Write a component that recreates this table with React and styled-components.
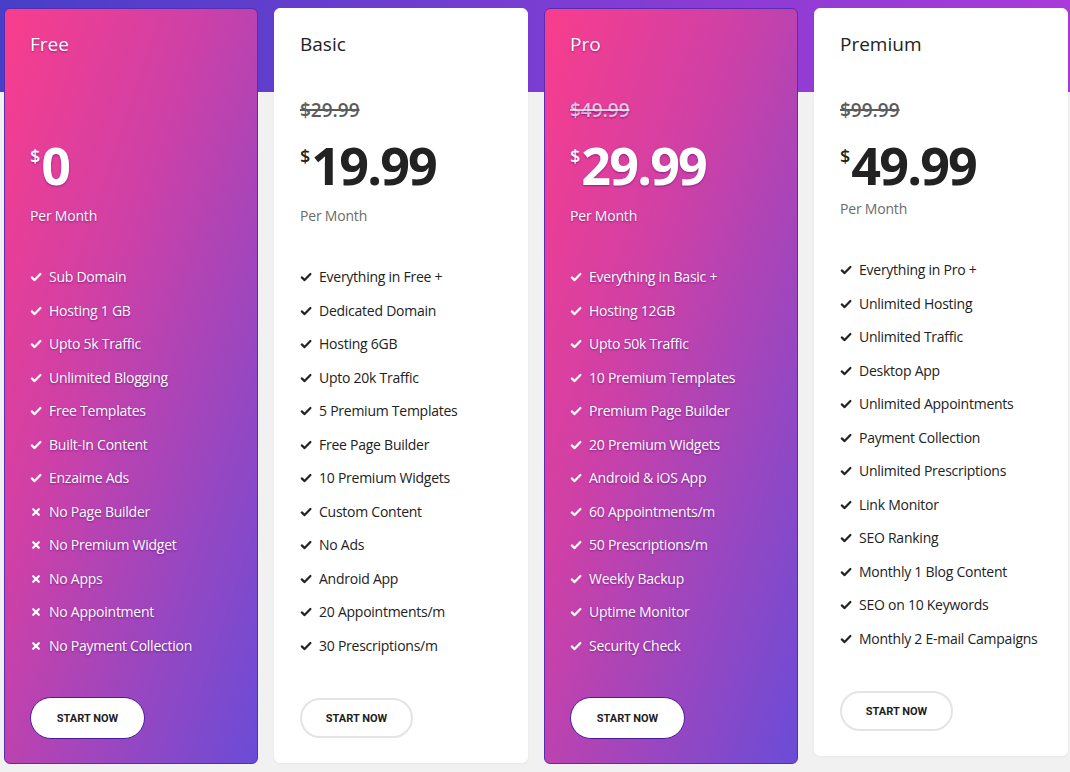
import React from "react";
import styled, { createGlobalStyle } from "styled-components";

const plans = [
  {
    name: "Free",
    price: "0",
    featured: true,
    features: [
      ["Sub Domain", true],
      ["Hosting 1 GB", true],
      ["Upto 5k Traffic", true],
      ["Unlimited Blogging", true],
      ["Free Templates", true],
      ["Built-In Content", true],
      ["Enzaime Ads", true],
      ["No Page Builder", false],
      ["No Premium Widget", false],
      ["No Apps", false],
      ["No Appointment", false],
      ["No Payment Collection", false],
    ],
  },
  {
    name: "Basic",
    oldPrice: "$29.99",
    price: "19.99",
    features: [
      "Everything in Free +",
      "Dedicated Domain",
      "Hosting 6GB",
      "Upto 20k Traffic",
      "5 Premium Templates",
      "Free Page Builder",
      "10 Premium Widgets",
      "Custom Content",
      "No Ads",
      "Android App",
      "20 Appointments/m",
      "30 Prescriptions/m",
    ],
  },
  {
    name: "Pro",
    oldPrice: "$49.99",
    price: "29.99",
    featured: true,
    features: [
      "Everything in Basic +",
      "Hosting 12GB",
      "Upto 50k Traffic",
      "10 Premium Templates",
      "Premium Page Builder",
      "20 Premium Widgets",
      "Android & iOS App",
      "60 Appointments/m",
      "50 Prescriptions/m",
      "Weekly Backup",
      "Uptime Monitor",
      "Security Check",
    ],
  },
  {
    name: "Premium",
    oldPrice: "$99.99",
    price: "49.99",
    tight: true,
    features: [
      "Everything in Pro +",
      "Unlimited Hosting",
      "Unlimited Traffic",
      "Desktop App",
      "Unlimited Appointments",
      "Payment Collection",
      "Unlimited Prescriptions",
      "Link Monitor",
      "SEO Ranking",
      "Monthly 1 Blog Content",
      "SEO on 10 Keywords",
      "Monthly 2 E-mail Campaigns",
    ],
  },
];

function CheckIcon() {
  return (
    <svg width="12" height="12" viewBox="0 0 12 12">
      <path
        d="M1.8 6.4 L4.6 9.1 L10.4 3"
        fill="none"
        stroke="currentColor"
        strokeWidth="2.2"
        strokeLinecap="round"
        strokeLinejoin="round"
      />
    </svg>
  );
}

function CrossIcon() {
  return (
    <svg width="12" height="12" viewBox="0 0 12 12">
      <path
        d="M3.2 3.2 L8.8 8.8 M8.8 3.2 L3.2 8.8"
        fill="none"
        stroke="currentColor"
        strokeWidth="2.2"
        strokeLinecap="round"
      />
    </svg>
  );
}

function App() {
  return (
    <Page>
      <GlobalStyle />
      <Grid>
        {plans.map((plan) => (
          <Card key={plan.name} $featured={plan.featured}>
            <Title>{plan.name}</Title>
            <OldPrice $featured={plan.featured}>{plan.oldPrice}</OldPrice>
            <PriceRow>
              <Currency>$</Currency>
              <Amount>{plan.price}</Amount>
            </PriceRow>
            <Period $tight={plan.tight} $featured={plan.featured}>
              Per Month
            </Period>
            <FeatureList>
              {plan.features.map((f) => {
                const label = Array.isArray(f) ? f[0] : f;
                const ok = Array.isArray(f) ? f[1] : true;
                return (
                  <Feature key={label}>
                    <IconBox>{ok ? <CheckIcon /> : <CrossIcon />}</IconBox>
                    {label}
                  </Feature>
                );
              })}
            </FeatureList>
            <StartButton $featured={plan.featured}>START NOW</StartButton>
          </Card>
        ))}
      </Grid>
    </Page>
  );
}

const GlobalStyle = createGlobalStyle`
  body {
    margin: 0;
    background: #f1f1f1;
    font-family: "Open Sans", "Noto Sans", sans-serif;
  }
`;

const Page = styled.div`
  min-height: 772px;
  background:
    linear-gradient(to right, #473fc8 0%, #7a3dd2 50%, #aa3ad9 100%) 0 0 / 100% 92px no-repeat,
    #f1f1f1;
`;

const Grid = styled.div`
  display: grid;
  grid-template-columns: repeat(4, 254px);
  gap: 16px;
  align-items: start;
  padding: 8px 0 0 4px;
`;

const Card = styled.div`
  display: flex;
  flex-direction: column;
  align-items: flex-start;
  box-sizing: border-box;
  padding: 21px 25px 24px;
  border-radius: 6px;
  border: 1px solid ${(p) => (p.$featured ? "#5a2cb4" : "#ffffff")};
  background: ${(p) =>
    p.$featured
      ? "linear-gradient(to bottom right, #f93d8c 0%, #cf40a6 38%, #6a4cd7 100%)"
      : "#ffffff"};
  color: ${(p) => (p.$featured ? "#ffffff" : "#222222")};
  box-shadow: ${(p) => (p.$featured ? "none" : "0 1px 3px rgba(0,0,0,0.04)")};
  text-shadow: ${(p) => (p.$featured ? "0 1px 2px rgba(90, 10, 110, 0.6)" : "none")};
`;

const Title = styled.h3`
  margin: 0;
  font-size: 19px;
  line-height: 28px;
  font-weight: 400;
`;

const OldPrice = styled.div`
  margin-top: 39px;
  min-height: 26px;
  font-size: 19px;
  line-height: 26px;
  font-weight: 600;
  color: ${(p) => (p.$featured ? "rgba(255,255,255,0.72)" : "#5c5c5c")};
  text-decoration: line-through;
  text-decoration-thickness: 2px;
`;

const PriceRow = styled.div`
  display: flex;
  align-items: flex-start;
  margin-top: 16px;
`;

const Currency = styled.span`
  margin-top: 8px;
  margin-right: 1px;
  font-size: 18px;
  line-height: 18px;
  font-weight: 600;
`;

const Amount = styled.span`
  font-size: 52px;
  line-height: 52px;
  font-weight: 700;
  letter-spacing: -1.8px;
`;

const Period = styled.div`
  margin-top: ${(p) => (p.$tight ? "8px" : "15px")};
  font-size: 14px;
  line-height: 20px;
  letter-spacing: -0.2px;
  color: ${(p) => (p.$featured ? "#ffffff" : "#6b6b6b")};
`;

const FeatureList = styled.ul`
  list-style: none;
  margin: 41px 0 0;
  padding: 0;
  display: flex;
  flex-direction: column;
  gap: 13.55px;
`;

const Feature = styled.li`
  display: flex;
  align-items: center;
  gap: 7px;
  font-size: 14px;
  line-height: 20px;
  letter-spacing: -0.25px;
  white-space: nowrap;
`;

const IconBox = styled.span`
  display: flex;
  align-items: center;
  justify-content: center;
  width: 12px;
  height: 12px;
`;

const StartButton = styled.button`
  margin-top: ${(p) => (p.$featured ? "41px" : "42px")};
  width: ${(p) => (p.$featured ? "115px" : "113px")};
  height: ${(p) => (p.$featured ? "42px" : "40px")};
  border-radius: 21px;
  border: ${(p) => (p.$featured ? "1px solid #4b1d9e" : "2px solid #e4e4e4")};
  background: #ffffff;
  color: #1d1d1d;
  font-family: Roboto, "Liberation Sans", sans-serif;
  font-size: 11px;
  font-weight: 700;
  text-shadow: none;
  cursor: pointer;
`;

export default App;
